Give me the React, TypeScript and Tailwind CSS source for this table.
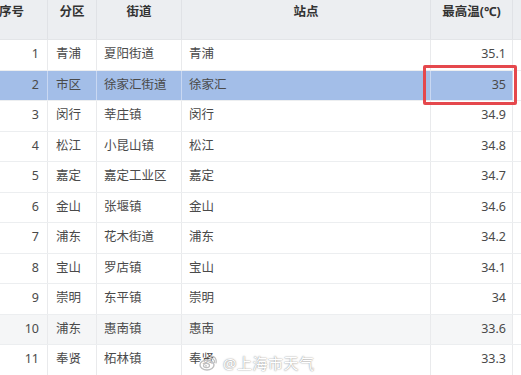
import React from "react";

const rows: [string, string, string, string, string][] = [
  ["1", "青浦", "夏阳街道", "青浦", "35.1"],
  ["2", "市区", "徐家汇街道", "徐家汇", "35"],
  ["3", "闵行", "莘庄镇", "闵行", "34.9"],
  ["4", "松江", "小昆山镇", "松江", "34.8"],
  ["5", "嘉定", "嘉定工业区", "嘉定", "34.7"],
  ["6", "金山", "张堰镇", "金山", "34.6"],
  ["7", "浦东", "花木街道", "浦东", "34.2"],
  ["8", "宝山", "罗店镇", "宝山", "34.1"],
  ["9", "崇明", "东平镇", "崇明", "34"],
  ["10", "浦东", "惠南镇", "惠南", "33.6"],
  ["11", "奉贤", "柘林镇", "奉贤", "33.3"],
];

const grid = "grid grid-cols-[72px_49px_85px_249px_82px_1fr]";

export default function App() {
  return (
    <div
      className="relative w-[521px] h-[375px] overflow-hidden bg-white text-[12.5px] text-[#4a4a4a]"
      style={{ fontFamily: '"Noto Sans", "Noto Sans CJK SC", sans-serif' }}
    >
      <div className="ml-[-24px] w-[545px]">
        <div className={`${grid} h-[40px] bg-[#eceef1] border-b border-[#e3e5e8] font-bold text-[#333]`}>
          {["序号", "分区", "街道", "站点", "最高温(℃)", ""].map((h, i) => (
            <div key={i} className="flex justify-center pt-[3px] border-r border-[#e0e2e6] last:border-r-0">
              <span className="leading-[18px]">{h}</span>
            </div>
          ))}
        </div>
        {rows.map((r, idx) => {
          const sel = idx === 1;
          const striped = idx === 9;
          const bg = sel ? "bg-[#a3bee8]" : striped ? "bg-[#f5f6f7]" : "bg-white";
          const bc = sel ? "border-[#c9d8f2]" : "border-[#e9eaec]";
          return (
            <div key={idx} className={`${grid} h-[30.5px] border-b border-[#eceef0] ${bg}`}>
              <div className={`flex items-center justify-end pr-[8px] border-r ${bc}`}>{r[0]}</div>
              <div className={`flex items-center pl-[8px] border-r ${bc}`}>{r[1]}</div>
              <div className={`flex items-center pl-[7px] border-r ${bc}`}>{r[2]}</div>
              <div className={`flex items-center pl-[7px] border-r ${bc}`}>{r[3]}</div>
              <div className={`flex items-center justify-end pr-[6px] border-r ${bc}`}>{r[4]}</div>
              <div className="bg-white" />
            </div>
          );
        })}
      </div>

      <div className="absolute left-[423px] top-[65px] w-[94px] h-[40px] border-[3px] border-[#e5484d] rounded-[2px]" />

      <div className="absolute left-[199px] top-[352px] flex items-center gap-[6px]">
        <svg width="18" height="16" viewBox="0 0 18 16" fill="none">
          <ellipse cx="8" cy="10" rx="7" ry="5" stroke="#bfbfbf" strokeWidth="1.4" fill="rgba(255,255,255,0.6)" />
          <ellipse cx="7.5" cy="10.5" rx="3" ry="2.2" stroke="#bfbfbf" strokeWidth="1.2" />
          <circle cx="7" cy="10.8" r="0.9" fill="#bfbfbf" />
          <path d="M11 3.5 C 14 3, 16 5, 15.5 7.5" stroke="#bfbfbf" strokeWidth="1.2" strokeLinecap="round" />
          <path d="M11.5 1.2 C 15.5 0.5, 18 4, 17 8" stroke="#bfbfbf" strokeWidth="1.2" strokeLinecap="round" />
        </svg>
        <span
          className="text-[15px] text-white tracking-[0.5px]"
          style={{ textShadow: "0 0 1px #999, 0 0 2px #aaa" }}
        >
          @上海市天气
        </span>
      </div>
    </div>
  );
}
